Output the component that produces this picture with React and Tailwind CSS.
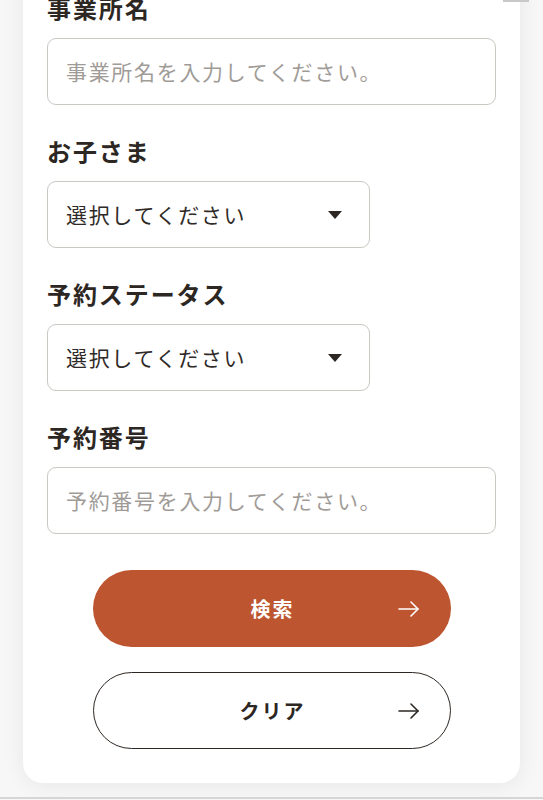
import React from "react";

const font = { fontFamily: '"Noto Sans CJK JP", "Noto Sans", sans-serif' };

function Arrow({ color }) {
  return (
    <svg width="21" height="16" viewBox="0 0 21 16" fill="none" stroke={color} strokeWidth="1.6" strokeLinecap="round" strokeLinejoin="round">
      <path d="M1 8h19" />
      <path d="M13 1l7 7-7 7" />
    </svg>
  );
}

function Label({ children, first }) {
  return (
    <div className={`${first ? "" : "mt-[29px]"} mb-[14px] h-[33px] text-[24px] leading-[33px] font-bold tracking-[0.08em] text-[#2d2723]`}>
      {children}
    </div>
  );
}

function TextInput({ placeholder }) {
  return (
    <div className="h-[67px] w-full rounded-[9px] border-[1.5px] border-[#cbc8c3] bg-white flex items-center px-[18px]">
      <span className="text-[21px] tracking-[0.08em] text-[#9f9b97]">{placeholder}</span>
    </div>
  );
}

function Select() {
  return (
    <div className="h-[67px] w-[323px] rounded-[9px] border-[1.5px] border-[#cbc8c3] bg-white flex items-center justify-between pl-[18px] pr-[27px]">
      <span className="text-[21px] tracking-[0.08em] text-[#2f2a27]">選択してください</span>
      <svg width="14" height="8" viewBox="0 0 14 8">
        <path d="M0 0h14L7 8z" fill="#2d2723" />
      </svg>
    </div>
  );
}

export default function App() {
  return (
    <div className="relative h-[800px] w-full overflow-hidden bg-[#f7f7f7]" style={font}>
      <div className="absolute left-[503px] top-0 h-[2px] w-[26px] bg-[#c8c8c8]" />
      <div className="mx-[23px] -mt-[40px] h-[823px] rounded-b-[20px] bg-white pt-[31px] px-[24px] shadow-[0_2px_22px_rgba(0,0,0,0.07)]">
        <Label first>事業所名</Label>
        <TextInput placeholder="事業所名を入力してください。" />
        <Label>お子さま</Label>
        <Select />
        <Label>予約ステータス</Label>
        <Select />
        <Label>予約番号</Label>
        <TextInput placeholder="予約番号を入力してください。" />
        <div className="mt-[36px] flex flex-col items-center gap-[25px]">
          <button className="relative flex h-[77px] w-[358px] items-center justify-center rounded-full bg-[#bd5530] text-[20px] font-bold tracking-[0.1em] text-white">
            <span className="pl-[2px]">検索</span>
            <span className="absolute right-[32px] top-1/2 -translate-y-1/2 flex">
              <Arrow color="#ffffff" />
            </span>
          </button>
          <button className="relative flex h-[77px] w-[358px] items-center justify-center rounded-full border-[1.5px] border-[#2d2723] bg-white text-[20px] font-bold tracking-[0.1em] text-[#2d2723]">
            <span className="pl-[2px]">クリア</span>
            <span className="absolute right-[31px] top-1/2 -translate-y-1/2 flex">
              <Arrow color="#2d2723" />
            </span>
          </button>
        </div>
      </div>
      <div className="absolute left-0 top-[797px] h-[2px] w-full bg-[#d6d6d6]" />
    </div>
  );
}
